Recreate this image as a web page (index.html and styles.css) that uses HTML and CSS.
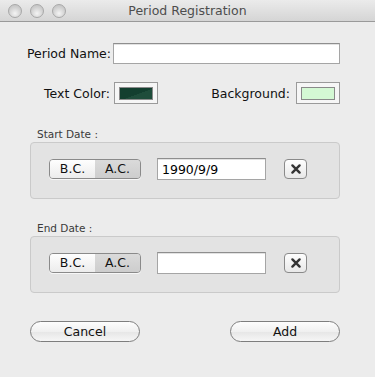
FILE: index.html
```html
<!DOCTYPE html>
<html lang="en">
<head>
  <meta charset="UTF-8" />
  <title>Period Registration</title>
  <link rel="stylesheet" href="styles.css">
</head>
<body>
  <div class="window">
    <div class="titlebar">
      <div class="lights">
        <span class="light"></span><span class="light"></span><span class="light"></span>
      </div>
      <div class="title">Period Registration</div>
    </div>

    <div class="content">
      <div class="name-row">
        <label class="name-label">Period Name:</label>
        <input class="field name-input" type="text">
      </div>

      <div class="color-row">
        <span class="color-label">Text Color:</span>
        <button class="swatch"><span class="chip chip-dark"></span></button>
        <span class="spacer"></span>
        <span class="bg-label">Background:</span>
        <button class="swatch"><span class="chip chip-light"></span></button>
      </div>

      <div class="group">
        <div class="group-title">Start Date :</div>
        <div class="group-box">
          <div class="segment">
            <span class="seg">B.C.</span><span class="seg seg-on">A.C.</span>
          </div>
          <input class="field date-input" type="text" value="1990/9/9">
          <button class="clear">
            <svg viewBox="0 0 10 10"><path d="M2 2L8 8M8 2L2 8"/></svg>
          </button>
        </div>
      </div>

      <div class="group">
        <div class="group-title">End Date :</div>
        <div class="group-box">
          <div class="segment">
            <span class="seg">B.C.</span><span class="seg seg-on">A.C.</span>
          </div>
          <input class="field date-input" type="text" value="">
          <button class="clear">
            <svg viewBox="0 0 10 10"><path d="M2 2L8 8M8 2L2 8"/></svg>
          </button>
        </div>
      </div>

      <div class="actions">
        <button class="pill">Cancel</button>
        <button class="pill">Add</button>
      </div>
    </div>
  </div>
</body>
</html>
```

FILE: styles.css
```css
html, body {
  margin: 0;
  height: 100%;
  background: #ececec;
  font-family: 'DejaVu Sans', sans-serif;
  color: #111;
}

.window {
  width: 375px;
  height: 377px;
  background: #ececec;
}

.titlebar {
  height: 21px;
  border-bottom: 1px solid #9a9a9a;
  background: linear-gradient(#ebebeb, #d5d5d5);
  display: flex;
  align-items: center;
  position: relative;
}

.lights {
  display: flex;
  gap: 8px;
  padding-left: 8px;
}

.light {
  width: 12px;
  height: 12px;
  border-radius: 50%;
  border: 1px solid #a8a8a8;
  background: radial-gradient(circle at 50% 70%, #f4f4f4, #cfcfcf 60%, #bdbdbd);
}

.title {
  position: absolute;
  left: 0;
  right: 0;
  text-align: center;
  font-size: 12.5px;
  color: #4d4d4d;
}

.content {
  padding: 21px 35px 0 30px;
  display: flex;
  flex-direction: column;
}

.name-row {
  display: flex;
  align-items: center;
  height: 21px;
  margin-left: -6px;
}

.name-label {
  flex-shrink: 0;
  width: 87px;
  white-space: nowrap;
  text-align: right;
  font-size: 12.5px;
  margin-right: 2px;
}

.field {
  box-sizing: border-box;
  border: 1px solid #a5a5a5;
  border-top-color: #8e8e8e;
  background: #fff;
  font-family: 'DejaVu Sans', sans-serif;
  font-size: 12.5px;
  padding: 2px 4px 0;
  outline: none;
  box-shadow: inset 0 1px 0 #e2e2e2;
}

.name-input {
  flex: 1;
  min-width: 0;
  height: 21px;
}

.color-row {
  display: flex;
  align-items: center;
  margin-top: 18px;
  height: 22px;
  font-size: 12.5px;
}

.color-label {
  width: 80px;
  white-space: nowrap;
  text-align: right;
  margin-right: 4px;
}

.spacer {
  flex: 1;
}

.bg-label {
  margin-right: 6px;
}

.swatch {
  box-sizing: border-box;
  width: 44px;
  height: 22px;
  border: 1px solid #9a9a9a;
  background: #f6f6f6;
  padding: 0;
  display: flex;
  align-items: center;
  justify-content: center;
}

.chip {
  box-sizing: border-box;
  width: 34px;
  height: 13px;
  border: 1px solid #8a8a8a;
}

.chip-dark {
  background: linear-gradient(160deg, #133f2f 55%, #1f4d3b 56%);
}

.chip-light {
  background: #d4f9d4;
}

.group {
  display: flex;
  flex-direction: column;
}

.group:nth-of-type(3) {
  margin-top: 24px;
}

.group:nth-of-type(4) {
  margin-top: 23px;
}

.group-title {
  font-size: 10.5px;
  color: #3a3a3a;
  padding-left: 7px;
  height: 14px;
  line-height: 12px;
}

.group-box {
  box-sizing: border-box;
  height: 57px;
  border: 1px solid #cacaca;
  border-radius: 4px;
  background: #e3e3e3;
  display: flex;
  align-items: center;
  padding: 0 0 4px 18px;
}

.segment {
  display: flex;
  box-sizing: border-box;
  height: 20px;
  width: 92px;
  border: 1px solid #8a8a8a;
  border-radius: 4px;
  overflow: hidden;
  font-size: 12.5px;
  box-shadow: 0 1px 0 #f7f7f7;
}

.seg {
  flex: 1;
  display: flex;
  align-items: center;
  justify-content: center;
  background: linear-gradient(#fefefe, #ececec);
}

.seg-on {
  background: linear-gradient(#dadada, #cdcdcd);
}

.date-input {
  width: 109px;
  height: 22px;
  margin-left: 16px;
  font-size: 12.5px;
}

.clear {
  box-sizing: border-box;
  width: 23px;
  height: 20px;
  margin-left: 18px;
  border: 1px solid #8a8a8a;
  border-radius: 4px;
  background: linear-gradient(#fefefe, #e8e8e8);
  padding: 0;
  display: flex;
  align-items: center;
  justify-content: center;
}

.clear svg {
  width: 12px;
  height: 12px;
  stroke: #333;
  stroke-width: 2;
  stroke-linecap: round;
}

.actions {
  display: flex;
  justify-content: space-between;
  margin-top: 28px;
}

.pill {
  box-sizing: border-box;
  width: 110px;
  height: 21px;
  border: 1px solid #7e7e7e;
  border-radius: 11px;
  background: linear-gradient(#fdfdfd, #f0f0f0 50%, #e6e6e6 51%, #f6f6f6);
  font-family: 'DejaVu Sans', sans-serif;
  font-size: 12.5px;
  color: #111;
  padding: 0;
}
```
